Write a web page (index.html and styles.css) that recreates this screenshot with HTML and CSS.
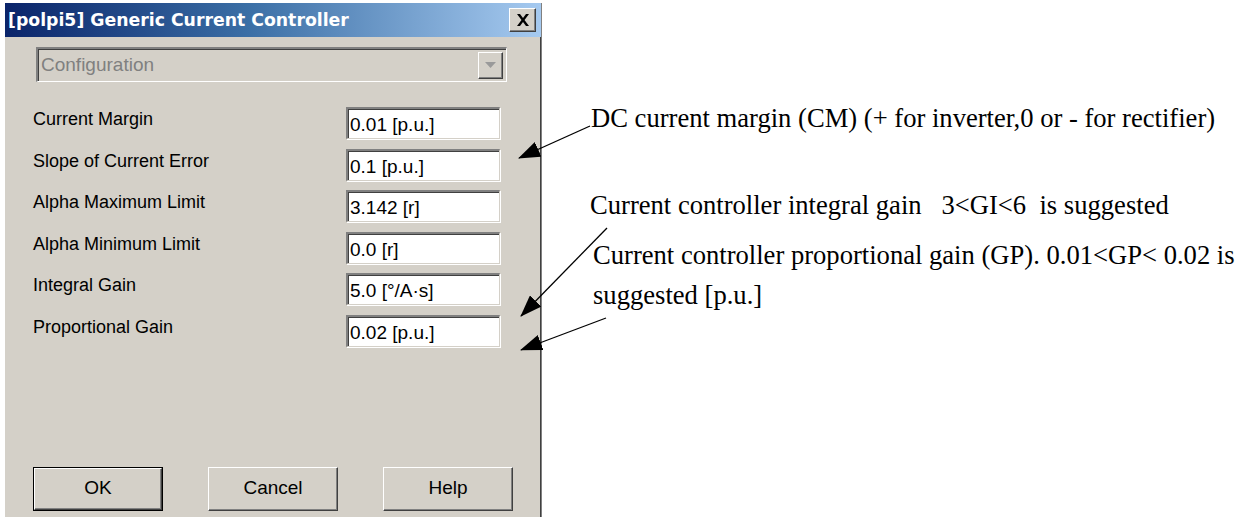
FILE: index.html
```html
<!DOCTYPE html>
<html>
<head>
<meta charset="utf-8">
<link rel="stylesheet" href="styles.css">
</head>
<body>
<div class="page">
  <div class="dialog">
    <div class="titlebar">
      <span class="title">[polpi5] Generic Current Controller</span>
      <span class="close"><svg width="14" height="12" viewBox="0 0 14 12"><path d="M1 0h3l3 4 3-4h3l-4.5 6 4.5 6h-3l-3-4-3 4h-3l4.5-6z" fill="#000"/></svg></span>
    </div>
    <div class="body">
      <div class="combo">
        <span class="combo-text">Configuration</span>
        <span class="combo-btn"><svg width="11" height="6" viewBox="0 0 11 6"><path d="M0 0h11l-5.5 6z" fill="#9a9a9a"/></svg></span>
      </div>
      <div class="fields">
        <div class="row"><span class="label">Current Margin</span><span class="input">0.01 [p.u.]</span></div>
        <div class="row"><span class="label">Slope of Current Error</span><span class="input">0.1 [p.u.]</span></div>
        <div class="row"><span class="label">Alpha Maximum Limit</span><span class="input">3.142 [r]</span></div>
        <div class="row"><span class="label">Alpha Minimum Limit</span><span class="input">0.0 [r]</span></div>
        <div class="row"><span class="label">Integral Gain</span><span class="input">5.0 [°/A·s]</span></div>
        <div class="row"><span class="label">Proportional Gain</span><span class="input">0.02 [p.u.]</span></div>
      </div>
      <div class="buttons">
        <span class="btn btn-default"><span class="btn-in">OK</span></span>
        <span class="btn"><span class="btn-in">Cancel</span></span>
        <span class="btn"><span class="btn-in">Help</span></span>
      </div>
    </div>
  </div>
  <div class="notes">
    <p class="note n1">DC current margin (CM) (+ for inverter,0 or - for rectifier)</p>
    <p class="note n2">Current controller integral gain&nbsp;&nbsp; 3&lt;GI&lt;6&nbsp; is suggested</p>
    <p class="note n3">Current controller proportional gain (GP). 0.01&lt;GP&lt; 0.02 is<br>suggested [p.u.]</p>
  </div>
  <svg class="arrows" width="1246" height="517" viewBox="0 0 1246 517">
    <defs>
      <marker id="ah" markerUnits="userSpaceOnUse" markerWidth="22" markerHeight="16" refX="21" refY="8" orient="auto">
        <path d="M0 0L22 8L0 16z" fill="#000"/>
      </marker>
    </defs>
    <line x1="590" y1="126" x2="519" y2="158" stroke="#000" stroke-width="1.3" marker-end="url(#ah)"/>
    <line x1="607" y1="228" x2="521" y2="316" stroke="#000" stroke-width="1.3" marker-end="url(#ah)"/>
    <line x1="606" y1="318" x2="521" y2="350" stroke="#000" stroke-width="1.3" marker-end="url(#ah)"/>
  </svg>
</div>
</body>
</html>
```

FILE: styles.css
```css
html, body {
  margin: 0;
  padding: 0;
  background: #fff;
}
.page {
  position: relative;
  width: 1246px;
  height: 517px;
  display: flex;
  align-items: flex-start;
  overflow: hidden;
}
.dialog {
  margin-left: 5px;
  margin-top: 3px;
  width: 537px;
  height: 514px;
  background: #d4d0c8;
  border-right: 1px solid #808080;
  box-shadow: inset -1px 0 0 #404040;
  box-sizing: border-box;
  display: flex;
  flex-direction: column;
  font-family: "Liberation Sans", Arial, sans-serif;
  font-size: 19px;
  color: #000;
}
.titlebar {
  height: 34px;
  background: linear-gradient(to right, #0a246a 0%, #3a6ea5 45%, #a6caf0 100%);
  display: flex;
  align-items: center;
  justify-content: space-between;
  padding: 0 5px 0 3px;
}
.title {
  font-family: "DejaVu Sans", Verdana, sans-serif;
  font-weight: bold;
  font-size: 17.3px;
  color: #fff;
  white-space: nowrap;
}
.close {
  width: 27px;
  height: 24px;
  box-sizing: border-box;
  background: #d4d0c8;
  border-top: 1px solid #fff;
  border-left: 1px solid #fff;
  border-right: 1px solid #404040;
  border-bottom: 1px solid #404040;
  box-shadow: inset -1px -1px 0 #808080;
  display: flex;
  align-items: center;
  justify-content: center;
}
.body {
  flex: 1;
  display: flex;
  flex-direction: column;
  padding: 10px 0 6px 0;
}
.combo {
  margin-left: 31px;
  width: 471px;
  height: 35px;
  box-sizing: border-box;
  border-top: 2px solid #808080;
  border-left: 2px solid #808080;
  border-right: 1px solid #fff;
  border-bottom: 1px solid #fff;
  box-shadow: inset 1px 1px 0 #404040;
  display: flex;
  align-items: center;
  justify-content: space-between;
  padding: 0 3px 0 3px;
}
.combo-text {
  color: #808080;
}
.combo-btn {
  width: 25px;
  height: 27px;
  box-sizing: border-box;
  border-top: 1px solid #fff;
  border-left: 1px solid #fff;
  border-right: 1px solid #404040;
  border-bottom: 1px solid #404040;
  box-shadow: inset -1px -1px 0 #808080;
  display: flex;
  align-items: center;
  justify-content: center;
}
.fields {
  margin-top: 25px;
  display: flex;
  flex-direction: column;
}
.row {
  height: 41.5px;
  display: flex;
  align-items: flex-start;
}
.label {
  width: 313px;
  padding-left: 28px;
  padding-top: 1px;
  font-size: 18px;
  line-height: 22px;
}
.input {
  width: 154px;
  height: 32px;
  box-sizing: border-box;
  background: #fff;
  border-top: 2px solid #808080;
  border-left: 2px solid #808080;
  border-right: 1px solid #d4d0c8;
  border-bottom: 1px solid #d4d0c8;
  box-shadow: inset 1px 1px 0 #404040, 1px 1px 0 #fff;
  padding: 5px 0 0 2px;
  line-height: 22px;
  white-space: nowrap;
}
.buttons {
  margin-top: auto;
  display: flex;
  gap: 45px;
  padding-left: 28px;
}
.btn {
  width: 130px;
  height: 44px;
  box-sizing: border-box;
  border-top: 1px solid #fff;
  border-left: 1px solid #fff;
  border-right: 1px solid #404040;
  border-bottom: 1px solid #404040;
  box-shadow: inset -1px -1px 0 #808080;
  display: flex;
}
.btn-in {
  flex: 1;
  display: flex;
  align-items: center;
  justify-content: center;
  padding-bottom: 3px;
}
.btn-default {
  border: 1px solid #000;
  box-shadow: none;
}
.btn-default .btn-in {
  border-top: 1px solid #fff;
  border-left: 1px solid #fff;
  border-right: 1px solid #404040;
  border-bottom: 1px solid #404040;
  box-shadow: inset -1px -1px 0 #808080;
}
.notes {
  display: flex;
  flex-direction: column;
  font-family: "Liberation Serif", "Times New Roman", serif;
  font-size: 26.6px;
  color: #000;
  padding-top: 103px;
}
.note {
  margin: 0;
  line-height: 30px;
  white-space: nowrap;
}
.n1 { padding-left: 49px; }
.n2 { padding-left: 48px; margin-top: 57px; }
.n3 { padding-left: 51px; margin-top: 15px; line-height: 40px; }
.arrows {
  position: absolute;
  left: 0;
  top: 0;
  pointer-events: none;
}
```
